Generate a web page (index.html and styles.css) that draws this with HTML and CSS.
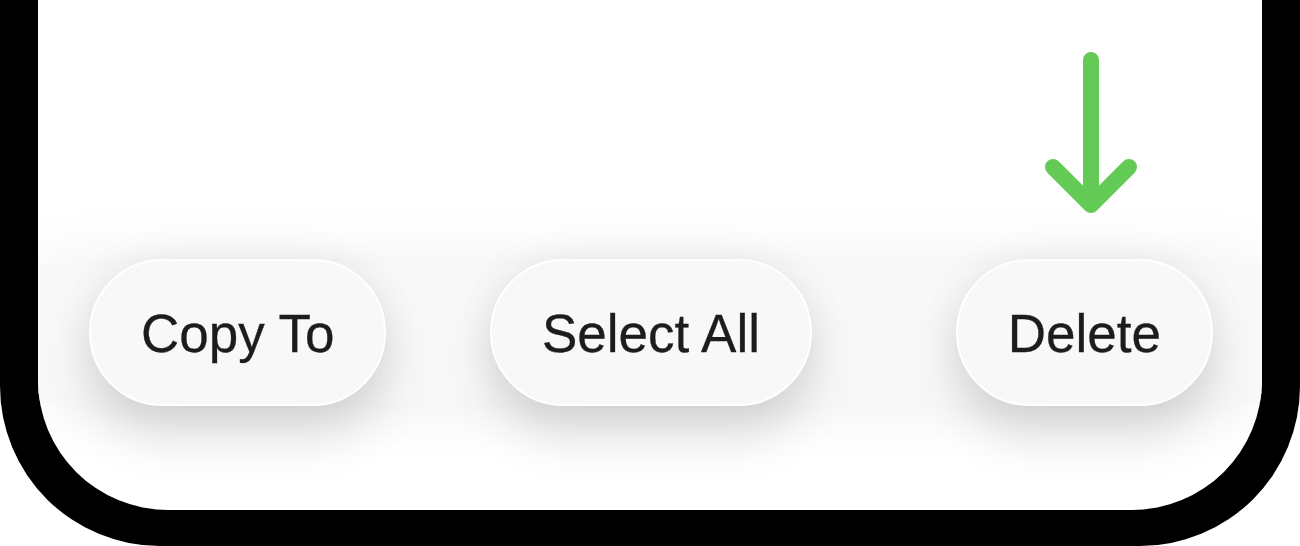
FILE: index.html
```html
<!DOCTYPE html>
<html lang="en">
<head>
<meta charset="utf-8">
<title>Edit toolbar</title>
<link rel="stylesheet" href="styles.css">
</head>
<body>
  <div class="device">
    <div class="screen">
      <div class="content"></div>
      <div class="toolbar">
        <button class="pill pill-start">Copy To</button>
        <button class="pill pill-center">Select All</button>
        <button class="pill pill-end">Delete</button>
      </div>
      <div class="footer"></div>
      <svg class="pointer" width="110" height="180" viewBox="0 0 110 180" aria-hidden="true">
        <path d="M55 10 V155 M17 117 L55 155 L93 117" fill="none" stroke="#63cb55" stroke-width="16" stroke-linecap="round" stroke-linejoin="round"/>
      </svg>
    </div>
  </div>
</body>
</html>
```

FILE: styles.css
```css
* {
  box-sizing: border-box;
}

html,
body {
  margin: 0;
  padding: 0;
  background: #ffffff;
}

body {
  width: 1300px;
  height: 546px;
  overflow: hidden;
  font-family: "Liberation Sans", Arial, sans-serif;
}

/* black bezel around the bottom of the phone */
.device {
  width: 1300px;
  height: 546px;
  background: #000000;
  border-radius: 0 0 160px 160px;
  padding: 0 38px 36px 38px;
}

.screen {
  position: relative;
  height: 510px;
  background: #ffffff;
  border-radius: 0 0 130px 130px;
  overflow: hidden;
  display: flex;
  flex-direction: column;
}

.content {
  height: 265px;
  flex: none;
}

.toolbar {
  flex: none;
  height: 137px;
  background: #f8f8f8;
  box-shadow: 0 0 70px rgba(0, 0, 0, 0.07);
  display: grid;
  grid-template-columns: 1fr auto 1fr;
  grid-template-rows: 137px;
  align-items: center;
  padding: 0 49px 0 51px;
}

.footer {
  flex: 1;
}

.pill {
  height: 147px;
  margin: -6px 0 -4px 0;
  padding: 2px 50px 0 50px;
  border: 2px solid #ffffff;
  border-radius: 74px;
  background: #f8f8f8;
  color: #1c1c1c;
  font-family: "Liberation Sans", Arial, sans-serif;
  font-size: 53px;
  line-height: 1;
  white-space: nowrap;
  -webkit-text-stroke: 0.3px #1c1c1c;
  box-shadow: 0 30px 50px rgba(0, 0, 0, 0.13), 0 0 40px rgba(0, 0, 0, 0.06);
}

.pill-start {
  justify-self: start;
}

.pill-center {
  justify-self: center;
}

.pill-end {
  justify-self: end;
}

/* green arrow pointing at the Delete button */
.pointer {
  position: absolute;
  left: 998px;
  top: 50px;
}
```
